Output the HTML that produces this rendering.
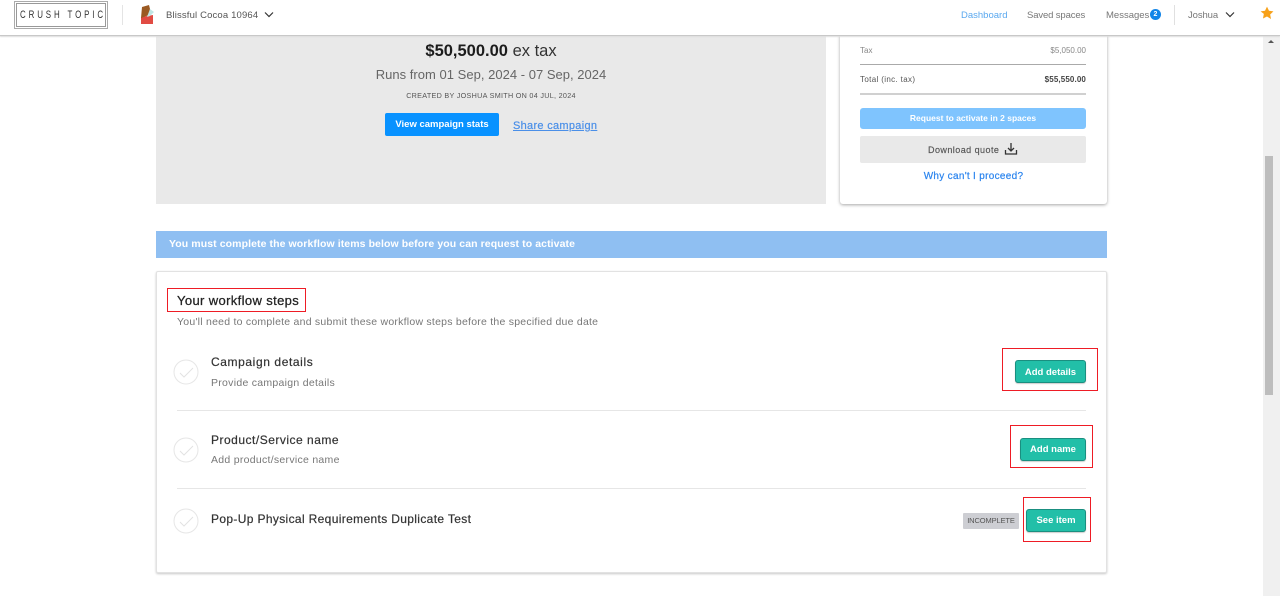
<!DOCTYPE html>
<html><head><meta charset="utf-8"><style>
html,body{margin:0;padding:0;width:1280px;height:596px;overflow:hidden;background:#fff;font-family:"Liberation Sans",sans-serif}
.a{position:absolute;white-space:nowrap}
.t{position:absolute;white-space:nowrap;line-height:16px}
.box{position:absolute;border:1.3px solid #ee1c25;box-sizing:border-box}
.btn{position:absolute;background:#22bfa8;border:1px solid #1a8f80;border-radius:3px;box-sizing:border-box;color:#fff;font-weight:bold;font-size:9.5px;letter-spacing:0;text-align:center;box-shadow:0 1px 1px rgba(0,0,0,.2)}
</style></head><body>
<div class="a" style="left:0;top:0;width:1280px;height:35px;background:#fff;border-bottom:1px solid #c8c8c8;box-shadow:0 1px 1px #ddd;z-index:5"></div>
<div style="position:absolute;z-index:6;left:0;top:0;width:1280px;height:35px">
<div class="a" style="left:14px;top:1px;width:92px;height:26px;border:1px solid #aaa"></div>
<div class="a" style="left:16px;top:3px;width:88px;height:22px;border:1px solid #999"></div>
<div class="t" style="left:20px;top:7px;font-size:11px;letter-spacing:4px;color:#333;transform:scaleX(.72);transform-origin:0 0">CRUSH TOPIC</div>
<div class="a" style="left:122px;top:5px;width:1px;height:20px;background:#e4e4e4"></div>
<svg class="a" style="left:140px;top:4px" width="14" height="21"><path d="M1 13l12-2v9H1z" fill="#e14b43"/><path d="M2 3l7-2 1 4-1 6-8 3z" fill="#9b5a22"/><path d="M10 5l4 3-4 4-3 1z" fill="#bfe6e4"/></svg>
<div class="t" style="left:166px;top:8px;font-size:9.5px;color:#555;letter-spacing:.15px">Blissful Cocoa 10964</div>
<svg class="a" style="left:264px;top:11px" width="10" height="8"><path d="M1 1.5l4 4 4-4" fill="none" stroke="#333" stroke-width="1.2"/></svg>
<div class="t" style="left:961px;top:8px;font-size:9.5px;color:#5aa8ef;letter-spacing:0">Dashboard</div>
<div class="t" style="left:1027px;top:8px;font-size:9.5px;color:#777;letter-spacing:-.13px">Saved spaces</div>
<div class="t" style="left:1106px;top:8px;font-size:9.5px;color:#777;letter-spacing:0">Messages</div>
<div class="a" style="left:1150px;top:9px;width:11px;height:11px;border-radius:50%;background:#1285e8;color:#fff;font-size:7px;font-weight:bold;text-align:center;line-height:11px">2</div>
<div class="a" style="left:1174px;top:5px;width:1px;height:20px;background:#e0e0e0"></div>
<div class="t" style="left:1188px;top:8px;font-size:9.5px;color:#777;letter-spacing:-.1px">Joshua</div>
<svg class="a" style="left:1225px;top:11px" width="10" height="8"><path d="M1 1.5l4 4 4-4" fill="none" stroke="#333" stroke-width="1.2"/></svg>
<svg class="a" style="left:1260px;top:6px" width="14" height="14" viewBox="0 0 24 24"><path d="M12 1l3.4 7.2 7.600 1-5.600 5.400 1.500 7.800L12 18l-6.900 3.400 1.500-7.800L1 9.200l7.600-1z" fill="#f7a11a"/></svg>
</div>

<div class="a" style="left:156px;top:36px;width:670px;height:168px;background:#e9e9e9"></div>
<div class="t" style="left:156px;top:43px;width:670px;text-align:center;font-size:16.5px;color:#333"><b style="color:#1c1c1c">$50,500.00</b> ex tax</div>
<div class="t" style="left:156px;top:67px;width:670px;text-align:center;font-size:13px;color:#666;letter-spacing:.02px">Runs from 01 Sep, 2024 - 07 Sep, 2024</div>
<div class="t" style="left:156px;top:88px;width:670px;text-align:center;font-size:7.2px;color:#555;letter-spacing:.3px">CREATED BY JOSHUA SMITH ON 04 JUL, 2024</div>
<div class="a" style="left:385px;top:113px;width:114px;height:23px;background:#0892ff;border-radius:2px;color:#fff;font-weight:bold;font-size:9.5px;letter-spacing:0;text-align:center;line-height:24px">View campaign stats</div>
<div class="t" style="left:513px;top:118px;font-size:11px;color:#4a8fe8;text-decoration:underline;letter-spacing:.3px;-webkit-text-stroke:.2px #4a8fe8">Share campaign</div>

<div class="a" style="left:840px;top:20px;width:267px;height:184px;background:#fff;border-radius:3px;box-shadow:0 1px 3px rgba(0,0,0,.35)"></div>
<div class="t" style="left:860px;top:43px;font-size:8px;color:#888">Tax</div>
<div class="t" style="left:986px;top:43px;width:100px;text-align:right;font-size:8px;color:#888">$5,050.00</div>
<div class="a" style="left:860px;top:64px;width:226px;height:1px;background:#aaa"></div>
<div class="t" style="left:860px;top:72px;font-size:8px;color:#555;letter-spacing:.35px">Total (inc. tax)</div>
<div class="t" style="left:986px;top:72px;width:100px;text-align:right;font-size:8px;color:#444;font-weight:bold;letter-spacing:.13px">$55,550.00</div>
<div class="a" style="left:860px;top:93px;width:226px;height:2px;background:#d0d0d0"></div>
<div class="a" style="left:860px;top:108px;width:226px;height:21px;background:#7fc4fe;border-radius:3px;color:#fff;font-weight:bold;font-size:8.5px;text-align:center;line-height:21px">Request to activate in 2 spaces</div>
<div class="a" style="left:860px;top:136px;width:226px;height:27px;background:#e9e9e9;border-radius:2px"></div>
<div class="t" style="left:928px;top:142px;font-size:9px;color:#555;letter-spacing:.45px;-webkit-text-stroke:.15px #555">Download quote</div>
<svg class="a" style="left:1004px;top:142px" width="14" height="14"><path d="M7 1v8M4 6l3 3 3-3M1.500 8v4h11V8" fill="none" stroke="#333" stroke-width="1.300"/></svg>
<div class="t" style="left:840px;top:168px;width:267px;text-align:center;font-size:10px;line-height:18px;color:#2a84ee;letter-spacing:.3px;-webkit-text-stroke:.2px #2a84ee">Why can't I proceed?</div>

<div class="a" style="left:156px;top:231px;width:951px;height:27px;background:#8fbff2"></div>
<div class="t" style="left:169px;top:236px;font-size:10.5px;font-weight:bold;color:#fff;letter-spacing:.085px">You must complete the workflow items below before you can request to activate</div>

<div class="a" style="left:156px;top:271px;width:951px;height:302px;background:#fff;border:1px solid #e2e2e2;box-sizing:border-box;border-radius:2px;box-shadow:0 1px 2px rgba(0,0,0,.22)"></div>
<div class="box" style="left:167px;top:288px;width:139px;height:24px"></div>
<div class="t" style="left:177px;top:293px;font-size:13px;color:#222;letter-spacing:.37px;-webkit-text-stroke:.25px #222">Your workflow steps</div>
<div class="t" style="left:177px;top:314px;font-size:10.5px;color:#777;letter-spacing:.24px">You'll need to complete and submit these workflow steps before the specified due date</div>

<svg class="a" style="left:173px;top:359px" width="26" height="26"><circle cx="13" cy="13" r="12" fill="none" stroke="#e6e6e6"/><path d="M7 14l4 4 9-9" fill="none" stroke="#e2e2e2"/></svg>
<div class="t" style="left:211px;top:354px;font-size:12px;color:#333;letter-spacing:.6px;-webkit-text-stroke:.2px #333">Campaign details</div>
<div class="t" style="left:211px;top:375px;font-size:10.5px;color:#777;letter-spacing:.28px">Provide campaign details</div>
<div class="box" style="left:1002px;top:348px;width:96px;height:43px"></div>
<div class="btn" style="left:1015px;top:360px;width:71px;height:23px;line-height:23px">Add details</div>
<div class="a" style="left:177px;top:410px;width:909px;height:1px;background:#e6e6e6"></div>

<svg class="a" style="left:173px;top:437px" width="26" height="26"><circle cx="13" cy="13" r="12" fill="none" stroke="#e6e6e6"/><path d="M7 14l4 4 9-9" fill="none" stroke="#e2e2e2"/></svg>
<div class="t" style="left:211px;top:432px;font-size:12px;color:#333;letter-spacing:.5px;-webkit-text-stroke:.2px #333">Product/Service name</div>
<div class="t" style="left:211px;top:452px;font-size:10.5px;color:#777;letter-spacing:.28px">Add product/service name</div>
<div class="box" style="left:1010px;top:425px;width:83px;height:43px"></div>
<div class="btn" style="left:1020px;top:438px;width:66px;height:23px;line-height:22px">Add name</div>
<div class="a" style="left:177px;top:488px;width:909px;height:1px;background:#e6e6e6"></div>

<svg class="a" style="left:173px;top:508px" width="26" height="26"><circle cx="13" cy="13" r="12" fill="none" stroke="#e6e6e6"/><path d="M7 14l4 4 9-9" fill="none" stroke="#e2e2e2"/></svg>
<div class="t" style="left:211px;top:511px;font-size:12px;color:#333;letter-spacing:.35px;-webkit-text-stroke:.2px #333">Pop-Up Physical Requirements Duplicate Test</div>
<div class="a" style="left:963px;top:513px;width:56px;height:16px;background:#cdced3;border-radius:1px;color:#555;font-size:7.5px;letter-spacing:-.12px;text-align:center;line-height:16px">INCOMPLETE</div>
<div class="box" style="left:1023px;top:497px;width:68px;height:45px"></div>
<div class="btn" style="left:1026px;top:509px;width:60px;height:23px;line-height:22px">See item</div>

<div class="a" style="left:1263px;top:36px;width:17px;height:560px;background:#f0f0f0"></div>
<div class="a" style="left:1265px;top:156px;width:8px;height:239px;background:#bdbdbd"></div>
<svg class="a" style="left:1265px;top:39px" width="15" height="5"><path d="M3 4l3-3 3 3z" fill="#555"/></svg>
</body></html>
